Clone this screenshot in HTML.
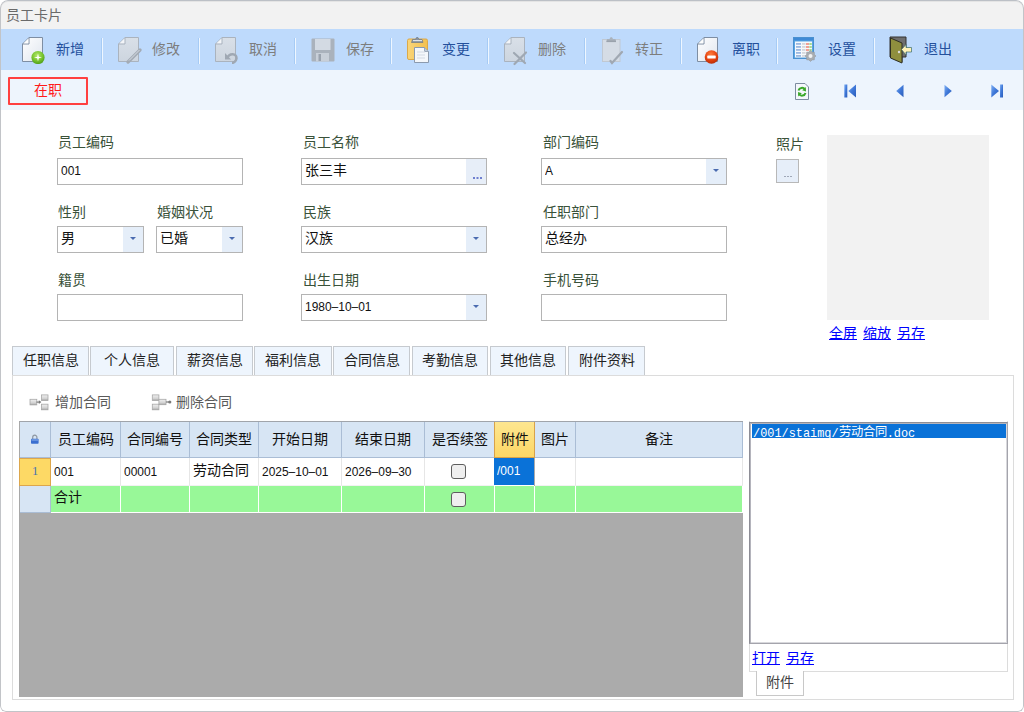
<!DOCTYPE html>
<html lang="zh-CN">
<head>
<meta charset="utf-8">
<style>
*{box-sizing:border-box;margin:0;padding:0}
html,body{width:1024px;height:712px;overflow:hidden;background:#ffffff;font-family:"Liberation Sans",sans-serif;}
.a{position:absolute}
.nw{white-space:nowrap}
#win{position:absolute;left:0;top:0;width:1024px;height:712px;background:#fff;overflow:hidden;border-radius:8px 8px 6px 6px}
#frame{position:absolute;left:0;top:0;width:1024px;height:712px;border:1px solid #c2c4c8;border-top-color:#bcc0c6;border-radius:8px 8px 6px 6px;box-shadow:inset 0 1px 0 #e4e4e4}
.tbt{position:absolute;top:9px;font-size:14px;white-space:nowrap}
.en{color:#24509c}
.dis{color:#7d7d7d}
.sep{position:absolute;top:9px;width:2px;height:26px;border-left:1px solid #a6cbf5;border-right:1px solid #eef6ff}
.lbl{position:absolute;font-size:14px;color:#3a523a;white-space:nowrap}
.inp{position:absolute;height:27px;border:1px solid #b4b4b4;background:#fff}
.inp .v{position:absolute;left:3px;top:0px;font-size:14px;color:#111;white-space:nowrap}
.inp .m{position:absolute;left:3px;top:4px;font-size:13px;color:#111;white-space:nowrap;transform:scaleX(0.92);transform-origin:0 0}
.dd{position:absolute;right:0;top:0;width:20px;height:25px;background:#e5eef9}
.dd:after{content:"";position:absolute;left:7px;top:10px;border-left:3.5px solid transparent;border-right:3.5px solid transparent;border-top:3.5px solid #4a6bb0}
.lnk{position:absolute;font-size:14px;color:#0000ff;text-decoration:underline;white-space:nowrap}
.tab{position:absolute;top:346px;height:29px;background:#eef5fd;border:1px solid #c6cacf;border-bottom:none}
.tab span{position:absolute;left:0;right:0;top:2px;text-align:center;font-size:14px;color:#222;white-space:nowrap}
.gh{position:absolute;top:422px;height:36px;background:#d7e5f4;border-right:1px solid #aabdd5;border-bottom:1px solid #aabdd5}
.gh span{position:absolute;left:0;right:0;top:6px;text-align:center;font-size:14px;color:#111;white-space:nowrap}
.gc{position:absolute;border-right:1px solid #e6e6e6;border-bottom:1px solid #e6e6e6}
.gc .m{position:absolute;left:3px;top:6px;font-size:13px;color:#111;white-space:nowrap;transform:scaleX(0.92);transform-origin:0 0}
.gc .v{position:absolute;left:3px;top:1px;font-size:14px;color:#111;white-space:nowrap}
.cb{position:absolute;width:15px;height:15px;border:1px solid #5e5e5e;border-radius:3px;background:#efefef}
</style>
</head>
<body>
<div id="win">
<svg width="0" height="0" style="position:absolute"><defs>
<linearGradient id="gdoc" x1="0" y1="0" x2="1" y2="1"><stop offset="0" stop-color="#ffffff"/><stop offset="1" stop-color="#dfe5ee"/></linearGradient>
<linearGradient id="gdis" x1="0" y1="0" x2="0" y2="1"><stop offset="0" stop-color="#d9e0e8"/><stop offset="1" stop-color="#cdd5df"/></linearGradient>
<radialGradient id="ggreen" cx="0.45" cy="0.35" r="0.7"><stop offset="0" stop-color="#b6ea6a"/><stop offset="0.6" stop-color="#74c12c"/><stop offset="1" stop-color="#4a9a18"/></radialGradient>
<radialGradient id="gred" cx="0.45" cy="0.3" r="0.75"><stop offset="0" stop-color="#ff7a3a"/><stop offset="0.6" stop-color="#e2400e"/><stop offset="1" stop-color="#b02a08"/></radialGradient>
<linearGradient id="gorange" x1="0" y1="0" x2="1" y2="0"><stop offset="0" stop-color="#f9d57a"/><stop offset="1" stop-color="#f3c04e"/></linearGradient>
<linearGradient id="gyel" x1="0" y1="0" x2="0" y2="1"><stop offset="0" stop-color="#fde48e"/><stop offset="1" stop-color="#fdd766"/></linearGradient>
</defs></svg>
<div class="a" style="left:0;top:0;width:1024px;height:29px;background:#f2f2f2"></div>
<div class="a nw" style="left:6px;top:4px;font-size:14px;color:#6a6a6a">员工卡片</div>
<div class="a" style="left:0;top:29px;width:1024px;height:41px;background:#bedafc">
<svg class="a" style="left:21px;top:7px" width="26" height="28" viewBox="0 0 26 28"><path d="M1.5,8 L8,1.5 L21.5,1.5 L21.5,25.5 L1.5,25.5 Z" fill="url(#gdoc)" stroke="#7e8ea3" stroke-width="1"/><path d="M1.5,8 L8,8 L8,1.5" fill="none" stroke="#7e8ea3" stroke-width="1"/><path d="M2.5,7.3 L7.3,2.5 L7.3,7.3 Z" fill="#ffffff" opacity="0.7"/><circle cx="17" cy="21.5" r="6.6" fill="url(#ggreen)"/><path d="M17,17.5 L17.8,20.7 L21,21.5 L17.8,22.3 L17,25.5 L16.2,22.3 L13,21.5 L16.2,20.7 Z" fill="#fff"/></svg>
<div class="tbt en" style="left:56px">新增</div>
<div class="sep" style="left:101px"></div>
<svg class="a" style="left:117px;top:7px" width="26" height="28" viewBox="0 0 26 28"><path d="M1.5,8 L8,1.5 L21.5,1.5 L21.5,25.5 L1.5,25.5 Z" fill="url(#gdis)" stroke="#aab3be" stroke-width="1"/><path d="M1.5,8 L8,8 L8,1.5" fill="none" stroke="#aab3be" stroke-width="1"/><path d="M2.5,7.3 L7.3,2.5 L7.3,7.3 Z" fill="#ffffff" opacity="0.7"/><path d="M11,26 L23,14" stroke="#a3abb5" stroke-width="3.2" stroke-linecap="round"/><path d="M12,24.5 L22.5,14" stroke="#d7dde4" stroke-width="1"/></svg>
<div class="tbt dis" style="left:152px">修改</div>
<div class="sep" style="left:198px"></div>
<svg class="a" style="left:214px;top:7px" width="26" height="28" viewBox="0 0 26 28"><path d="M1.5,8 L8,1.5 L21.5,1.5 L21.5,25.5 L1.5,25.5 Z" fill="url(#gdis)" stroke="#aab3be" stroke-width="1"/><path d="M1.5,8 L8,8 L8,1.5" fill="none" stroke="#aab3be" stroke-width="1"/><path d="M2.5,7.3 L7.3,2.5 L7.3,7.3 Z" fill="#ffffff" opacity="0.7"/><path d="M13.5,22 C15,17 23,17 22.5,22.5 C22,26 19,27 18,27" fill="none" stroke="#9fa8b3" stroke-width="2.4"/><path d="M11,17 L11,23.5 L17,23.5 Z" fill="#9fa8b3"/></svg>
<div class="tbt dis" style="left:249px">取消</div>
<div class="sep" style="left:294px"></div>
<svg class="a" style="left:311px;top:8px" width="26" height="28" viewBox="0 0 26 28"><rect x="0.5" y="1.5" width="23" height="23" rx="1" fill="#aab2bc"/><rect x="4" y="2" width="15.5" height="11" fill="#d3dae3"/><rect x="5" y="16" width="13" height="8.5" fill="#c8cfd8"/><rect x="7.5" y="17" width="2.5" height="7" fill="#99a2ad"/></svg>
<div class="tbt dis" style="left:346px">保存</div>
<div class="sep" style="left:390px"></div>
<svg class="a" style="left:407px;top:8px" width="26" height="28" viewBox="0 0 26 28"><rect x="0.5" y="2" width="20" height="20.5" rx="1.5" fill="url(#gorange)" stroke="#dca94a" stroke-width="1"/><path d="M4.5,5.5 L16,5.5 L15,2.5 L12,2.5 L11,0.6 L9.5,0.6 L8.5,2.5 L5.5,2.5 Z" fill="#8a95a3" stroke="#6f7a88" stroke-width="0.7"/><path d="M6,3.6 H15" stroke="#e8ecf0" stroke-width="1"/><path d="M7.5,10.5 L17.5,10.5 L21.5,14.5 L21.5,25.5 L7.5,25.5 Z" fill="#f4f7fb" stroke="#8b9aae" stroke-width="1"/><path d="M17.5,10.5 L17.5,14.5 L21.5,14.5" fill="#c0cad6" stroke="#8b9aae" stroke-width="0.8"/><path d="M10,15 H18 M10,18 H18 M10,21 H18" stroke="#d3dae4" stroke-width="1"/></svg>
<div class="tbt en" style="left:442px">变更</div>
<div class="sep" style="left:487px"></div>
<svg class="a" style="left:503px;top:7px" width="26" height="30" viewBox="0 0 26 30"><path d="M1.5,8 L8,1.5 L21.5,1.5 L21.5,25.5 L1.5,25.5 Z" fill="url(#gdis)" stroke="#aab3be" stroke-width="1"/><path d="M1.5,8 L8,8 L8,1.5" fill="none" stroke="#aab3be" stroke-width="1"/><path d="M2.5,7.3 L7.3,2.5 L7.3,7.3 Z" fill="#ffffff" opacity="0.7"/><path d="M11,17 L22,27 M23,16.5 L11.5,28" stroke="#9fa8b3" stroke-width="2.2" stroke-linecap="round"/></svg>
<div class="tbt dis" style="left:538px">删除</div>
<div class="sep" style="left:584px"></div>
<svg class="a" style="left:602px;top:7px" width="26" height="30" viewBox="0 0 26 30"><rect x="0.5" y="3.5" width="17.5" height="22" fill="#d5dce5" stroke="#c0c8d2" stroke-width="1"/><path d="M4.5,6 L14,6 L13.5,3 L11,3 L10,1.2 L8.5,1.2 L7.5,3 L5,3 Z" fill="#aab2bc"/><rect x="4.5" y="4.5" width="9.5" height="1.6" fill="#9aa2ac"/><path d="M8.5,25 L10,27 L20,16" fill="none" stroke="#a0a8b2" stroke-width="2.2" stroke-linecap="round"/></svg>
<div class="tbt dis" style="left:635px">转正</div>
<div class="sep" style="left:680px"></div>
<svg class="a" style="left:696px;top:7px" width="26" height="30" viewBox="0 0 26 30"><path d="M1.5,8 L8,1.5 L21.5,1.5 L21.5,25.5 L1.5,25.5 Z" fill="url(#gdoc)" stroke="#7e8ea3" stroke-width="1"/><path d="M1.5,8 L8,8 L8,1.5" fill="none" stroke="#7e8ea3" stroke-width="1"/><path d="M2.5,7.3 L7.3,2.5 L7.3,7.3 Z" fill="#ffffff" opacity="0.7"/><circle cx="15.5" cy="21" r="6.8" fill="url(#gred)"/><rect x="11.3" y="19.6" width="8.4" height="3" rx="0.6" fill="#fff"/></svg>
<div class="tbt en" style="left:732px">离职</div>
<div class="sep" style="left:776px"></div>
<svg class="a" style="left:793px;top:8px" width="26" height="30" viewBox="0 0 26 30"><rect x="0.5" y="0.5" width="20" height="21" fill="#5aa6e4" stroke="#4a90d0" stroke-width="1"/><rect x="1" y="1" width="19" height="2.5" fill="#3f8ad6"/><rect x="2" y="4.5" width="17" height="16" fill="#f6f9fc"/><rect x="3" y="6.0" width="5" height="1.8" fill="#9cb8e0"/><rect x="9" y="6.0" width="3.5" height="1.8" fill="#d4d8dc"/><rect x="3" y="9.0" width="5" height="1.8" fill="#9cb8e0"/><rect x="9" y="9.0" width="3.5" height="1.8" fill="#d4d8dc"/><rect x="3" y="12.0" width="5" height="1.8" fill="#9cb8e0"/><rect x="9" y="12.0" width="3.5" height="1.8" fill="#d4d8dc"/><rect x="3" y="15.0" width="5" height="1.8" fill="#9cb8e0"/><rect x="9" y="15.0" width="3.5" height="1.8" fill="#d4d8dc"/><rect x="3" y="18.0" width="5" height="1.8" fill="#9cb8e0"/><rect x="9" y="18.0" width="3.5" height="1.8" fill="#d4d8dc"/><rect x="13" y="6.0" width="3" height="2" fill="#f0a096"/><rect x="16.3" y="6.0" width="2.5" height="2" fill="#a6dc94"/><rect x="13" y="9.0" width="3" height="2" fill="#f0a096"/><rect x="16.3" y="9.0" width="2.5" height="2" fill="#a6dc94"/><rect x="13" y="12.0" width="3" height="2" fill="#f0a096"/><rect x="16.3" y="12.0" width="2.5" height="2" fill="#a6dc94"/><polygon points="22.90,19.00 21.38,20.61 21.32,22.82 19.11,22.88 17.50,24.40 15.89,22.88 13.68,22.82 13.62,20.61 12.10,19.00 13.62,17.39 13.68,15.18 15.89,15.12 17.50,13.60 19.11,15.12 21.32,15.18 21.38,17.39" fill="#a9adb2" stroke="#92979c" stroke-width="0.6"/><circle cx="17.5" cy="19" r="2" fill="#f0f2f4"/></svg>
<div class="tbt en" style="left:828px">设置</div>
<div class="sep" style="left:873px"></div>
<svg class="a" style="left:889px;top:7px" width="26" height="30" viewBox="0 0 26 30"><path d="M1,1 L17,1 L17,21 L13,21 L13,26 L1,21 Z" fill="#6e6e6e" stroke="#333" stroke-width="1"/><path d="M1.5,2 L13,7 L13,27 L1.5,22 Z" fill="#8f8f3e" stroke="#2f2f22" stroke-width="1"/><circle cx="10" cy="16" r="1.2" fill="#ddd"/><path d="M12.5,13.5 L17,8.5 L17,11.5 L22.5,11.5 L22.5,16 L17,16 L17,19 Z" fill="#fff2b8" stroke="#3a6a6a" stroke-width="0.7"/></svg>
<div class="tbt en" style="left:924px">退出</div>
</div>
<div class="a" style="left:0;top:70px;width:1024px;height:40px;background:#eef5fd">
<div class="a" style="left:8px;top:7px;width:80px;height:28px;border:2px solid #ff4040;border-radius:1px"><span class="a nw" style="left:0;right:0;top:0px;text-align:center;font-size:14px;color:#ff1a1a">在职</span></div>
<svg class="a" style="left:794px;top:12px" width="16" height="19" viewBox="0 0 16 19"><path d="M1.5,1.5 L11,1.5 L14.5,5 L14.5,17.5 L1.5,17.5 Z" fill="#f4f7fb" stroke="#7d8ca0" stroke-width="1"/><path d="M4.5,8.5 A3.6,3.6 0 0 1 11,7.5" fill="none" stroke="#3aa82a" stroke-width="2"/><path d="M11.8,5 L12,9.5 L8.2,8.2 Z" fill="#3aa82a"/><path d="M11.5,11 A3.6,3.6 0 0 1 5,12" fill="none" stroke="#3aa82a" stroke-width="2"/><path d="M4.2,14.5 L4,10 L7.8,11.3 Z" fill="#3aa82a"/></svg><svg class="a" style="left:843px;top:14px" width="15" height="14" viewBox="0 0 15 14"><defs><linearGradient id="gnav" x1="0" y1="0" x2="1" y2="1"><stop offset="0" stop-color="#7fb0f4"/><stop offset="0.5" stop-color="#3f78d8"/><stop offset="1" stop-color="#2a5cb8"/></linearGradient></defs><rect x="1.3" y="0.5" width="3" height="13" fill="url(#gnav)"/><path d="M13,0.5 L13,13.5 L5.3,7 Z" fill="url(#gnav)"/></svg><svg class="a" style="left:895px;top:14px" width="10" height="14" viewBox="0 0 10 14"><path d="M8.5,0.8 L8.5,13.2 L1.2,7 Z" fill="url(#gnav)"/></svg><svg class="a" style="left:943px;top:14px" width="10" height="14" viewBox="0 0 10 14"><path d="M1.5,0.8 L1.5,13.2 L8.8,7 Z" fill="url(#gnav)"/></svg><svg class="a" style="left:990px;top:14px" width="15" height="14" viewBox="0 0 15 14"><path d="M1.3,0.5 L1.3,13.5 L9,7 Z" fill="url(#gnav)"/><rect x="10" y="0.5" width="3" height="13" fill="url(#gnav)"/></svg>
</div>
<div class="lbl" style="left:58px;top:131px">员工编码</div>
<div class="inp" style="left:57px;top:158px;width:186px"><span class="m">001</span></div>
<div class="lbl" style="left:303px;top:131px">员工名称</div>
<div class="inp" style="left:301px;top:158px;width:186px"><span class="v">张三丰</span><div class="a" style="right:0;top:0;width:20px;height:25px;background:#e7eef8"><div class="a" style="left:7px;top:18px;width:2px;height:2px;background:#6f7fcf;box-shadow:3.5px 0 0 #6f7fcf,7px 0 0 #6f7fcf"></div></div></div>
<div class="lbl" style="left:543px;top:131px">部门编码</div>
<div class="inp" style="left:541px;top:158px;width:186px"><span class="m">A</span><div class="dd"></div></div>
<div class="lbl" style="left:776px;top:133px">照片</div>
<div class="a" style="left:776px;top:159px;width:23px;height:24px;border:1px solid #b8b8b8;background:#e6eef9"><div class="a" style="left:7px;top:16px;width:2px;height:1px;background:#a0a8b8;box-shadow:3px 0 0 #a0a8b8,6px 0 0 #a0a8b8"></div></div>
<div class="a" style="left:827px;top:135px;width:162px;height:185px;background:#f2f2f2"></div>
<div class="lnk" style="left:829px;top:322px">全屏</div>
<div class="lnk" style="left:863px;top:322px">缩放</div>
<div class="lnk" style="left:897px;top:322px">另存</div>
<div class="lbl" style="left:58px;top:201px">性别</div>
<div class="inp" style="left:57px;top:226px;width:87px"><span class="v">男</span><div class="dd"></div></div>
<div class="lbl" style="left:157px;top:201px">婚姻状况</div>
<div class="inp" style="left:156px;top:226px;width:87px"><span class="v">已婚</span><div class="dd"></div></div>
<div class="lbl" style="left:303px;top:201px">民族</div>
<div class="inp" style="left:301px;top:226px;width:186px"><span class="v">汉族</span><div class="dd"></div></div>
<div class="lbl" style="left:543px;top:201px">任职部门</div>
<div class="inp" style="left:541px;top:226px;width:186px"><span class="v">总经办</span></div>
<div class="lbl" style="left:58px;top:269px">籍贯</div>
<div class="inp" style="left:57px;top:294px;width:186px"></div>
<div class="lbl" style="left:303px;top:269px">出生日期</div>
<div class="inp" style="left:301px;top:294px;width:186px"><span class="m">1980–10–01</span><div class="dd"></div></div>
<div class="lbl" style="left:543px;top:269px">手机号码</div>
<div class="inp" style="left:541px;top:294px;width:186px"></div>
<div class="a" style="left:12px;top:375px;width:1002px;height:325px;border:1px solid #dcdcdc"></div>
<div class="tab" style="left:12px;width:77px"><span>任职信息</span></div>
<div class="tab" style="left:90px;width:84px"><span>个人信息</span></div>
<div class="tab" style="left:176px;width:77px"><span>薪资信息</span></div>
<div class="tab" style="left:254px;width:78px"><span>福利信息</span></div>
<div class="tab" style="left:333px;width:77px"><span>合同信息</span></div>
<div class="tab" style="left:412px;width:76px"><span>考勤信息</span></div>
<div class="tab" style="left:490px;width:76px"><span>其他信息</span></div>
<div class="tab" style="left:568px;width:77px"><span>附件资料</span></div>
<svg class="a" style="left:29px;top:394px" width="21" height="17" viewBox="0 0 21 17"><defs><linearGradient id="gblk" x1="0" y1="0" x2="0" y2="1"><stop offset="0" stop-color="#f0f0f0"/><stop offset="0.7" stop-color="#d0d0d0"/><stop offset="1" stop-color="#9a9a9a"/></linearGradient></defs><rect x="1" y="5.3" width="6.8" height="5.6" fill="url(#gblk)" stroke="#a8a8a8" stroke-width="0.8"/><path d="M7.5,8.1 H10.5" stroke="#7a7a7a" stroke-width="1.2"/><path d="M9.8,6.2 L12.4,8.1 L9.8,10 Z" fill="#7a7a7a"/><rect x="12.4" y="0.9" width="6.6" height="5.6" fill="url(#gblk)" stroke="#a8a8a8" stroke-width="0.8"/><rect x="12.4" y="10.2" width="6.6" height="5.6" fill="url(#gblk)" stroke="#a8a8a8" stroke-width="0.8"/></svg>
<div class="a nw" style="left:55px;top:391px;font-size:14px;color:#5a5a5a">增加合同</div>
<svg class="a" style="left:151px;top:394px" width="22" height="17" viewBox="0 0 22 17"><rect x="1.3" y="0.9" width="6.6" height="5.6" fill="url(#gblk)" stroke="#a8a8a8" stroke-width="0.8"/><rect x="1.3" y="10.2" width="6.6" height="5.6" fill="url(#gblk)" stroke="#a8a8a8" stroke-width="0.8"/><rect x="7.9" y="5.3" width="7.1" height="5.4" fill="url(#gblk)" stroke="#a8a8a8" stroke-width="0.8"/><path d="M15,8 H18" stroke="#7a7a7a" stroke-width="1.2"/><circle cx="18.8" cy="8" r="1.6" fill="#7a7a7a"/></svg>
<div class="a nw" style="left:176px;top:391px;font-size:14px;color:#5a5a5a">删除合同</div>
<div class="a" style="left:19px;top:421px;width:724px;height:276px;background:#ababab;border-top:1px solid #a0a4aa;border-left:1px solid #a8a8a8"></div>
<div class="gh" style="left:20px;width:31px"></div>
<svg class="a" style="left:30px;top:434px" width="10" height="11" viewBox="0 0 10 11"><path d="M2.7,5 V3.3 A2.1,2.1 0 0 1 6.9,3.3 V5" fill="none" stroke="#8f98a3" stroke-width="1.2"/><rect x="1" y="4.8" width="7.6" height="5" rx="0.8" fill="#3a6fd0"/><rect x="1.5" y="5.3" width="6.6" height="1.4" fill="#7aa2e6"/></svg>
<div class="gh" style="left:51px;width:70px"><span>员工编码</span></div>
<div class="gh" style="left:121px;width:69px"><span>合同编号</span></div>
<div class="gh" style="left:190px;width:69px"><span>合同类型</span></div>
<div class="gh" style="left:259px;width:83px"><span>开始日期</span></div>
<div class="gh" style="left:342px;width:83px"><span>结束日期</span></div>
<div class="gh" style="left:425px;width:70px"><span>是否续签</span></div>
<div class="gh" style="left:494px;width:41px;background:linear-gradient(#fde690,#fdd765);border:1px solid #d8a24a;border-top:none"><span>附件</span></div>
<div class="gh" style="left:535px;width:41px"><span>图片</span></div>
<div class="gh" style="left:576px;width:167px"><span>备注</span></div>
<div class="a" style="left:19px;top:458px;width:32px;height:28px;background:#fdd965;border:1px solid #dca64c"><span class="a nw" style="left:0;right:0;top:5px;text-align:center;font-size:12.5px;color:#4a72b0;font-family:'Liberation Serif',serif">1</span></div>
<div class="a" style="left:20px;top:486px;width:31px;height:27px;background:#d7e5f4;border-right:1px solid #aabdd5;border-bottom:1px solid #aabdd5"></div>
<div class="gc" style="left:51px;top:458px;width:70px;height:28px;background:#fff;border-bottom-color:#f2f2f2"><span class="m">001</span></div>
<div class="gc" style="left:51px;top:486px;width:70px;height:27px;background:#98f898;border-right:1px solid #fff;border-bottom:1px solid #fff"><span class="v" style="top:0">合计</span></div>
<div class="gc" style="left:121px;top:458px;width:69px;height:28px;background:#fff;border-bottom-color:#f2f2f2"><span class="m">00001</span></div>
<div class="gc" style="left:121px;top:486px;width:69px;height:27px;background:#98f898;border-right:1px solid #fff;border-bottom:1px solid #fff"></div>
<div class="gc" style="left:190px;top:458px;width:69px;height:28px;background:#fff;border-bottom-color:#f2f2f2"><span class="v">劳动合同</span></div>
<div class="gc" style="left:190px;top:486px;width:69px;height:27px;background:#98f898;border-right:1px solid #fff;border-bottom:1px solid #fff"></div>
<div class="gc" style="left:259px;top:458px;width:83px;height:28px;background:#fff;border-bottom-color:#f2f2f2"><span class="m">2025–10–01</span></div>
<div class="gc" style="left:259px;top:486px;width:83px;height:27px;background:#98f898;border-right:1px solid #fff;border-bottom:1px solid #fff"></div>
<div class="gc" style="left:342px;top:458px;width:83px;height:28px;background:#fff;border-bottom-color:#f2f2f2"><span class="m">2026–09–30</span></div>
<div class="gc" style="left:342px;top:486px;width:83px;height:27px;background:#98f898;border-right:1px solid #fff;border-bottom:1px solid #fff"></div>
<div class="gc" style="left:425px;top:458px;width:70px;height:28px;background:#fff;border-bottom-color:#f2f2f2"><div class="cb" style="left:26px;top:6px"></div></div>
<div class="gc" style="left:425px;top:486px;width:70px;height:27px;background:#98f898;border-right:1px solid #fff;border-bottom:1px solid #fff"><div class="cb" style="left:26px;top:6px"></div></div>
<div class="a" style="left:494px;top:458px;width:40px;height:28px;background:#0a72d8;border-bottom:1px solid #fff"><span class="a nw" style="left:3px;top:5px;font-size:13px;color:#fff;transform:scaleX(0.92);transform-origin:0 0">/001</span></div>
<div class="gc" style="left:495px;top:486px;width:40px;height:27px;background:#98f898;border-right:1px solid #fff;border-bottom:1px solid #fff"></div>
<div class="gc" style="left:535px;top:458px;width:41px;height:28px;background:#fff;border-bottom-color:#f2f2f2"></div>
<div class="gc" style="left:535px;top:486px;width:41px;height:27px;background:#98f898;border-right:1px solid #fff;border-bottom:1px solid #fff"></div>
<div class="gc" style="left:576px;top:458px;width:167px;height:28px;background:#fff;border-bottom-color:#f2f2f2"></div>
<div class="gc" style="left:576px;top:486px;width:167px;height:27px;background:#98f898;border-right:1px solid #fff;border-bottom:1px solid #fff"></div>
<div class="a" style="left:749px;top:421px;width:259px;height:251px;border:1px solid #dcdcdc;border-top:none"></div>
<div class="a" style="left:749px;top:422px;width:259px;height:222px;border:1px solid #a4a4ac;border-top-color:#8e8e96;border-left-color:#8e8e96;background:#fff;box-shadow:inset 1px 1px 0 #b4b4bc,inset -1px -1px 0 #d8d8dc"></div>
<div class="a" style="left:752px;top:424px;width:254px;height:14px;background:#0a72d8"></div>
<div class="a nw" style="left:753px;top:423px;color:#fff"><span style="font-family:'Liberation Mono',monospace;font-size:11.9px">/001/staimg/</span><span style="font-size:12.3px;position:relative;top:-1px">劳动合同</span><span style="font-family:'Liberation Mono',monospace;font-size:11.9px">.doc</span></div>
<div class="lnk" style="left:752px;top:647px">打开</div>
<div class="lnk" style="left:786px;top:647px">另存</div>
<div class="a" style="left:756px;top:671px;width:48px;height:25px;border:1px solid #c8c8c8;border-top:none;background:#fff"><span class="a nw" style="left:9px;top:0px;font-size:14px;color:#444">附件</span></div>
<div id="frame"></div>
</div>
</body>
</html>
